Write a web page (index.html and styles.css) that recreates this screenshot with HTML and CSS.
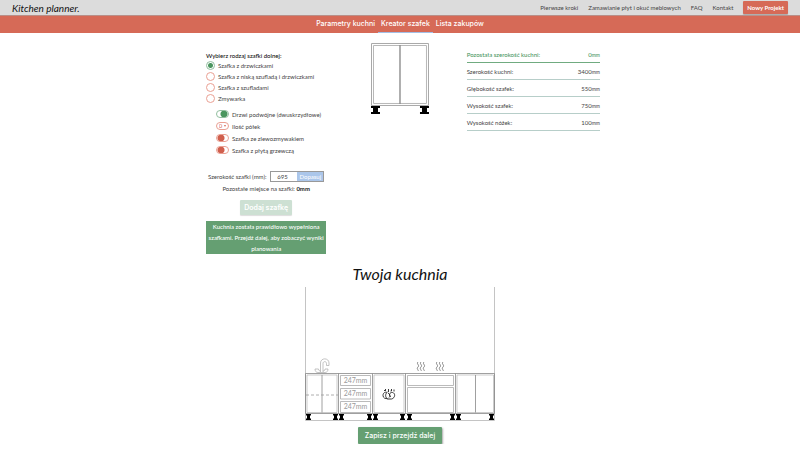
FILE: index.html
```html
<!DOCTYPE html>
<html lang="pl">
<head>
<meta charset="utf-8">
<meta name="viewport" content="width=device-width, initial-scale=1">
<title>Kitchen planner.</title>
<link rel="stylesheet" href="styles.css">
</head>
<body>
<header class="topbar">
  <a class="logo" href="#">Kitchen planner.</a>
  <nav class="links">
    <a href="#">Pierwsze kroki</a>
    <a href="#">Zamawianie płyt i okuć meblowych</a>
    <a href="#">FAQ</a>
    <a href="#">Kontakt</a>
    <button class="new-project" type="button">Nowy Projekt</button>
  </nav>
</header>
<nav class="steps">
  <a href="#">Parametry kuchni</a>
  <a class="active" href="#">Kreator szafek</a>
  <a href="#">Lista zakupów</a>
</nav>
<main>
  <div class="creator">
    <form class="options">
      <fieldset class="types">
        <legend>Wybierz rodzaj szafki dolnej:</legend>
        <label><input type="radio" name="type" checked>Szafka z drzwiczkami</label>
        <label><input type="radio" name="type">Szafka z niską szufladą i drzwiczkami</label>
        <label><input type="radio" name="type">Szafka z szufladami</label>
        <label><input type="radio" name="type">Zmywarka</label>
      </fieldset>
      <div class="extras">
        <label><input class="switch" type="checkbox" checked>Drzwi podwójne (dwuskrzydłowe)</label>
        <label><span class="shelves"><select><option>0</option><option>1</option><option>2</option></select></span>Ilość półek</label>
        <label><input class="switch" type="checkbox">Szafka ze zlewozmywakiem</label>
        <label><input class="switch" type="checkbox">Szafka z płytą grzewczą</label>
      </div>
      <div class="width-row">
        <label for="width">Szerokość szafki (mm):</label>
        <div class="width-box"><input id="width" type="text" value="695"><button type="button">Dopasuj</button></div>
      </div>
      <p class="remaining">Pozostałe miejsce na szafki: <b>0mm</b></p>
      <button class="add" type="button" disabled>Dodaj szafkę</button>
      <p class="notice">Kuchnia została prawidłowo wypełniona szafkami. Przejdź dalej, aby zobaczyć wyniki planowania</p>
    </form>
    <div class="preview">
      <svg class="cabinet" viewBox="370 42 60 74" role="img" aria-label="Szafka">
        <g fill="none" stroke="#8d8d8d">
          <path stroke="#a8a8a8" d="M371.5 43.5h57v62h-57z"/>
          <path stroke="#b8b8b8" d="M373.5 45.5h53v58h-53z"/>
          <path stroke-width="1.4" d="M400 45v59"/>
        </g>
        <path d="M371 106h9v2h-2v4h2v2h-9v-2h2v-4h-2zM420 106h9v2h-2v4h2v2h-9v-2h2v-4h-2z"/>
      </svg>
    </div>
    <dl class="params">
      <div class="left"><dt>Pozostała szerokość kuchni:</dt><dd>0<small>mm</small></dd></div>
      <div><dt>Szerokość kuchni:</dt><dd>3400<small>mm</small></dd></div>
      <div><dt>Głębokość szafek:</dt><dd>550<small>mm</small></dd></div>
      <div><dt>Wysokość szafek:</dt><dd>750<small>mm</small></dd></div>
      <div><dt>Wysokość nóżek:</dt><dd>100<small>mm</small></dd></div>
    </dl>
  </div>
  <section class="kitchen">
    <h2>Twoja kuchnia</h2>
    <svg class="plan" viewBox="304 286 192 134" role="img" aria-label="Twoja kuchnia">
      <defs>
        <path id="leg" d="M0 413h5v1.500h-1v3h1v1.500h-5v-1.500h1v-3h-1z"/>
        <path id="steam" d="M1 0c-2 2 2 3 0 5s1 3 0 4M4 0c-2 2 2 3 0 5s1 3 0 4M7 0c-2 2 2 3 0 5s1 3 0 4"/>
      </defs>
      <path fill="none" stroke="#c4c4c4" d="M305.500 286v133.500h189v-133.500"/>
      <g fill="none" stroke="#888" stroke-width=".8">
        <path d="M305.500 372.500h189v40h-189zM338.500 372.500v40M372.500 372.500v40M405.500 372.500v40M455.500 372.500v40"/>
        <path stroke="#aaa" stroke-width=".6" d="M307 374h30v37.500h-30zM374 374h30v37.500h-30zM457 374h36.500v37.500h-36.500z"/>
        <path d="M322 374v37.500M475.500 374v37.500"/>
        <path stroke="#aaa" d="M340.500 374.500h30v10h-30zM340.500 387.500h30v10.500h-30zM340.500 400.500h30v11h-30zM407.500 374.500h46v10h-46zM407.500 386.500h46v25h-46z"/>
        <path stroke="#999" stroke-dasharray="3 2" d="M306 394h32"/>
      </g>
      <g fill="none" stroke="#aaa" stroke-width=".7">
        <path d="M320.500 371v-9c0-5.500 8.500-5.500 8.500 0v2.500h-2.500v-2c0-2.500-3.500-2.500-3.500 0v8.500M315 368h3.500c0 1.500 1 2 2 2M315 368c0 2 1 3.500 3 3.500h7c2 0 3-1.500 3-3.500h-3c0 1.500-1 2-2 2"/>
      </g>
      <g fill="none" stroke="#777" stroke-width=".9">
        <use href="#steam" x="417" y="361"/><use href="#steam" x="436" y="361"/>
      </g>
      <g fill="none" stroke="#222" stroke-width=".9">
        <path d="M387 391.500c-2-1-4 .5-4 3s2.500 3.500 4.500 3M387.500 391c-2.500 2-2.500 5 0 7h4c4-1 4-6 1-6.500s-4 3-1.500 4.500M388 392c2 1 2.500 3 1 4.500"/>
        <path d="M385.500 388v2M384 389.500h1M388.500 388v3M391.500 388v2M390.500 390h1M394 388.500v2"/>
      </g>
      <use href="#leg" x="306"/><use href="#leg" x="333"/><use href="#leg" x="339"/><use href="#leg" x="367"/><use href="#leg" x="373"/>
      <use href="#leg" x="400"/><use href="#leg" x="407"/><use href="#leg" x="450"/><use href="#leg" x="456"/><use href="#leg" x="489"/>
      <g class="size"><text x="355.500" y="381.500">247mm</text><text x="355.500" y="395">247mm</text><text x="355.500" y="408">247mm</text></g>
    </svg>
    <button class="save" type="button">Zapisz i przejdź dalej</button>
  </section>
</main>
</body>
</html>
```
FILE: styles.css
```css
* { box-sizing: border-box; }
body {
  margin: 0;
  background: #fff;
  color: #444;
  font: 6px/9px Lato, "Open Sans", sans-serif;
}
button, input, select { font: inherit; margin: 0; padding: 0; border: 0; }
a { color: inherit; text-decoration: none; }
p, h2, dl, dd { margin: 0; }

.topbar {
  display: flex;
  justify-content: space-between;
  align-items: center;
  height: 16px;
  padding: 0 12px;
  background: #dcdcdc;
  border-bottom: 1px solid #b98f88;
}
.logo { color: #111; font: italic 10px/14px Lato, sans-serif; }
.links { display: flex; align-items: center; gap: 10px; }
.new-project {
  height: 13px;
  padding: 0 4px;
  border-radius: 1px;
  background: #d66a57;
  color: #fff;
  font-weight: 700;
  box-shadow: 0 1px 1px #aaa;
}
.steps {
  display: flex;
  justify-content: center;
  height: 17px;
  background: #d66a57;
  color: #fff;
  font: 500 7px/16px Inter, sans-serif;
}
.steps a { padding: 0 3px; border-bottom: 1px solid transparent; }
.steps .active { border-color: #a3bfe6; }

.creator {
  display: grid;
  grid-template-columns: repeat(3, 1fr);
  width: 50%;
  margin: 0 auto;
  padding-top: 9px;
}
.options { display: flex; flex-direction: column; padding: 9px 7px 0 6px; }
.types { margin: 0; padding: 0; border: 0; }
.types legend { padding: 0; color: #111; font-weight: 500; }
.types label, .extras label { display: flex; align-items: center; white-space: nowrap; }
.types label { gap: 3px; height: 11px; }
input[type="radio"] {
  appearance: none;
  width: 9px;
  height: 9px;
  border: 1px solid #eaa093;
  border-radius: 50%;
}
input[type="radio"]:checked {
  border-color: #92bf9f;
  background: radial-gradient(circle, #4b965f 2px, transparent 3px);
}
.extras { padding: 4px 0 0 10px; }
.extras label { gap: 3px; height: 12px; }
.switch, .shelves {
  width: 13px;
  height: 8px;
  border: 1px solid #eaa093;
  border-radius: 4px;
}
.switch {
  appearance: none;
  background: radial-gradient(circle at 4px 3px, #d05f4d 3px, transparent 4px);
}
.switch:checked {
  border-color: #92bf9f;
  background: radial-gradient(circle at 7px 3px, #4b965f 3px, transparent 4px);
}
.shelves { display: flex; align-items: center; justify-content: space-evenly; color: #d66a57; }
.shelves::after { content: ""; border: 1px solid transparent; border-top: 2px solid #d66a57; }
.shelves select { appearance: none; width: 4px; background: none; color: inherit; line-height: 6px; }
.width-row {
  display: flex;
  align-items: center;
  justify-content: space-between;
  margin-top: 15px;
  padding: 0 2px;
}
.width-box { display: flex; height: 11px; border: 1px solid #999; }
.width-box input { width: 26px; padding-left: 6px; color: #444; }
.width-box button { width: 26px; background: #abc6ea; color: #fff; }
.remaining { margin-top: 2px; text-align: center; }
.remaining b { color: #222; font-weight: 700; }
.add {
  align-self: center;
  margin-top: 7px;
  padding: 0 4px;
  height: 15px;
  border-radius: 1px;
  background: #cde0d3;
  color: #fff;
  font: 600 7px/9px Inter, sans-serif;
  box-shadow: 0 1px 1px #ddd;
}
.notice {
  margin-top: 6px;
  background: #659f72;
  color: #fff;
  font-weight: 500;
  line-height: 11px;
  text-align: center;
}
.preview { display: flex; justify-content: center; align-items: flex-start; }
.cabinet { width: 45%; }
.params { padding-top: 4px; }
.params div {
  display: flex;
  justify-content: space-between;
  height: 17px;
  line-height: 17px;
  border-bottom: 1px solid #b7cec9;
}
.params .left { color: #4b965f; font-weight: 500; border-color: #70ab80; }
.params small { font-size: 5px; }

.kitchen { display: flex; flex-direction: column; align-items: center; padding-top: 10px; }
.kitchen h2 { color: #111; font: italic 16px/20px Lato, sans-serif; }
.plan { width: 24%; margin-top: 3px; }
.size { fill: #999; font-size: 7px; text-anchor: middle; }
.save {
  height: 17px;
  margin-top: 6px;
  padding: 0 7px;
  border-radius: 1px;
  background: #659f72;
  color: #fff;
  font: 500 7px/9px Inter, sans-serif;
  box-shadow: 1px 1px 2px #aaa;
}
```
